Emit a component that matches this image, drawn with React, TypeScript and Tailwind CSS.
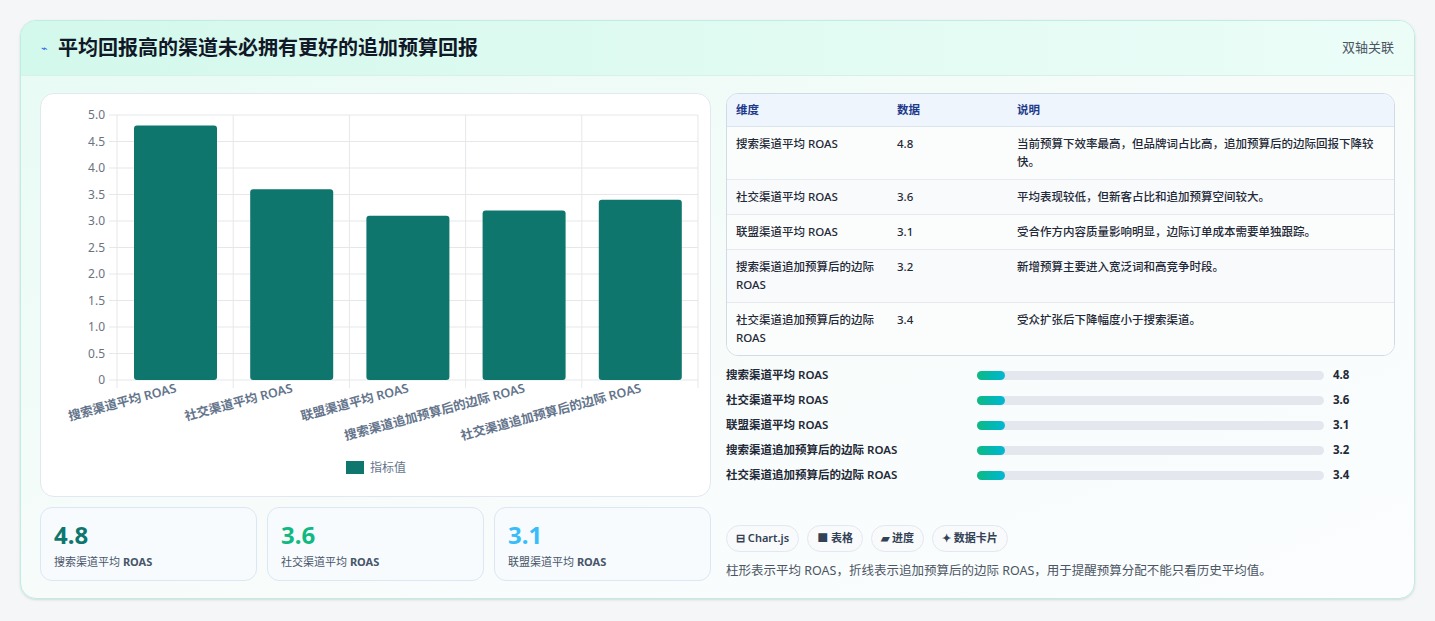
import React from "react";

const F = { fontFamily: '"Noto Sans","Noto Sans CJK SC",sans-serif' };
const cats = ["搜索渠道平均 ROAS", "社交渠道平均 ROAS", "联盟渠道平均 ROAS", "搜索渠道追加预算后的边际 ROAS", "社交渠道追加预算后的边际 ROAS"];
const vals = [4.8, 3.6, 3.1, 3.2, 3.4];
const rows = [
  ["搜索渠道平均 ROAS", "4.8", "当前预算下效率最高，但品牌词占比高，追加预算后的边际回报下降较快。"],
  ["社交渠道平均 ROAS", "3.6", "平均表现较低，但新客占比和追加预算空间较大。"],
  ["联盟渠道平均 ROAS", "3.1", "受合作方内容质量影响明显，边际订单成本需要单独跟踪。"],
  ["搜索渠道追加预算后的边际 ROAS", "3.2", "新增预算主要进入宽泛词和高竞争时段。"],
  ["社交渠道追加预算后的边际 ROAS", "3.4", "受众扩张后下降幅度小于搜索渠道。"],
];

function Chart() {
  const x0 = 76, x1 = 657, y0 = 21, yb = 286, cw = (x1 - x0) / 5;
  const ticks = [0, 0.5, 1, 1.5, 2, 2.5, 3, 3.5, 4, 4.5, 5];
  return (
    <svg width="670" height="403" style={F}>
      {ticks.map((t) => {
        const y = yb - t * 53;
        return (
          <g key={t}>
            <line x1={x0 - 8} x2={x1} y1={y} y2={y} stroke="#e5e7eb" />
            <text x={x0 - 12} y={y + 4} fontSize="12" fill="#6b7280" textAnchor="end">{t === 0 ? "0" : t.toFixed(1)}</text>
          </g>
        );
      })}
      {[0, 1, 2, 3, 4, 5].map((i) => (
        <line key={i} x1={x0 + i * cw} x2={x0 + i * cw} y1={y0} y2={yb + 8} stroke="#e5e7eb" />
      ))}
      {vals.map((v, i) => {
        const h = v * 53;
        return <rect key={i} x={x0 + i * cw + 17} y={yb - h} width={83} height={h} rx="3" fill="#0f766e" />;
      })}
      {cats.map((c, i) => {
        const ax = x0 + i * cw + cw / 2 + 2, ay = yb + 12;
        return (
          <text key={i} x={ax} y={ay} fontSize="12.5" fill="#64748b" textAnchor="end" fontWeight="600" transform={`rotate(-15 ${ax} ${ay})`}>{c}</text>
        );
      })}
      <rect x="305" y="367" width="18" height="13" fill="#0f766e" />
      <text x="329" y="378" fontSize="12" fill="#64748b">指标值</text>
    </svg>
  );
}

export default function App() {
  return (
    <div className="w-[1435px] h-[621px] bg-[#f5f6f8] pt-[20px] pl-[20px]" style={F}>
      <div className="w-[1395px] h-[579px] rounded-[16px] border border-[#bdeee0] bg-gradient-to-br from-[#e6fbf3] via-[#f7fcfb] to-[#fbfdfe] overflow-hidden shadow-sm">
        <div className="h-[55px] flex items-center justify-between px-[20px] bg-gradient-to-r from-[#d3f8ec] to-[#ecfdf8] border-b border-[#d8f0ea]">
          <div className="flex items-center gap-[10px]">
            <span className="text-[#2563eb] text-[11px]">⌁</span>
            <span className="text-[20px] font-bold text-[#111827]">平均回报高的渠道未必拥有更好的追加预算回报</span>
          </div>
          <span className="text-[13px] text-[#4b5563]">双轴关联</span>
        </div>
        <div className="flex gap-[15px] px-[19px] pt-[17px]">
          <div className="w-[671px] flex flex-col gap-[10px]">
            <div className="h-[404px] rounded-[14px] border border-[#e2e8f0] bg-white overflow-hidden">
              <Chart />
            </div>
            <div className="flex gap-[10px]">
              {[["4.8", "text-[#0f766e]", "搜索渠道平均"], ["3.6", "text-[#10b981]", "社交渠道平均"], ["3.1", "text-[#38bdf8]", "联盟渠道平均"]].map(([v, c, l]) => (
                <div key={v} className="w-[217px] h-[74px] rounded-[12px] border border-[#dbe7f3] bg-[#f8fbfe] px-[13px] pt-[12px]">
                  <div className={`text-[24px] font-bold leading-[30px] ${c}`}>{v}</div>
                  <div className="text-[11px] text-[#475569] mt-[4px]">{l} <b>ROAS</b></div>
                </div>
              ))}
            </div>
          </div>
          <div className="w-[670px] flex flex-col">
            <div className="rounded-[12px] border border-[#cfdbe6] bg-white overflow-hidden text-[11.5px] text-[#1f2937]">
              <div className="h-[33px] flex items-center bg-[#eef5fd] text-[#1e3a8a] font-semibold border-b border-[#dbe3ec]">
                <div className="w-[170px] pl-[9px]">维度</div><div className="w-[120px]">数据</div><div>说明</div>
              </div>
              {rows.map((r, i) => (
                <div key={i} className={`flex py-[8px] leading-[18px] border-b border-[#e5eaf0] last:border-b-0 font-medium ${i % 2 ? "bg-[#f8fafc]" : "bg-[#fbfdfc]"}`}>
                  <div className="w-[170px] pl-[9px] pr-[20px]">{r[0]}</div>
                  <div className="w-[120px]">{r[1]}</div>
                  <div className="w-[365px]">{r[2]}</div>
                </div>
              ))}
            </div>
            <div className="flex flex-col gap-[7px] mt-[10px]">
              {rows.map((r, i) => (
                <div key={i} className="flex items-center h-[18px] text-[11.5px] font-semibold text-[#1f2937]">
                  <div className="w-[251px]">{r[0]}</div>
                  <div className="w-[347px] h-[9px] rounded-full bg-[#e5e7ef]"><div className="w-[28px] h-full rounded-full bg-gradient-to-r from-[#10b981] to-[#06b6d4]" /></div>
                  <div className="ml-[9px] font-bold">{r[1]}</div>
                </div>
              ))}
            </div>
            <div className="flex gap-[8px] mt-[41px]">
              {["⊟ Chart.js", "■ 表格", "▰ 进度", "✦ 数据卡片"].map((c) => (
                <span key={c} className="h-[27px] px-[9px] flex items-center rounded-full border border-[#e2e8f0] bg-[#f8fafc] text-[11px] font-semibold text-[#334155]">{c}</span>
              ))}
            </div>
            <div className="mt-[10px] text-[12.5px] text-[#4b5563]">柱形表示平均 ROAS，折线表示追加预算后的边际 ROAS，用于提醒预算分配不能只看历史平均值。</div>
          </div>
        </div>
      </div>
    </div>
  );
}
